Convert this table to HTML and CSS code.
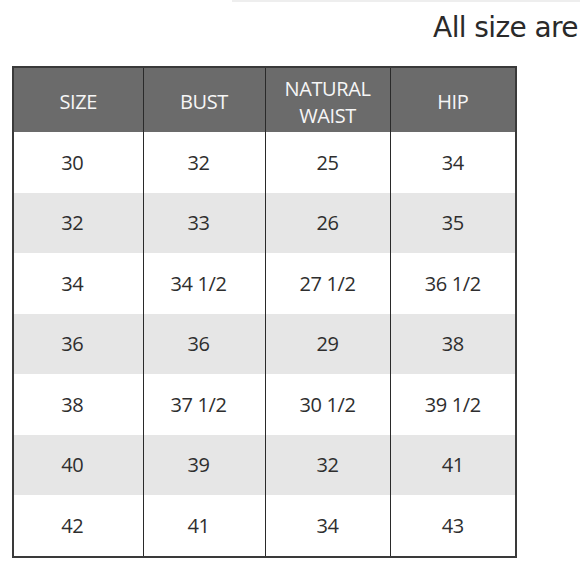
FILE: index.html
```html
<!DOCTYPE html>
<html>
<head>
<meta charset="utf-8">
<link rel="stylesheet" href="styles.css">
</head>
<body>
<div class="topline"></div>
<div class="note">All size are</div>
<table class="chart">
  <colgroup>
    <col class="c1"><col class="c2"><col class="c3"><col class="c4">
  </colgroup>
  <thead>
    <tr><th>SIZE</th><th>BUST</th><th>NATURAL<br>WAIST</th><th>HIP</th></tr>
  </thead>
  <tbody>
    <tr><td>30</td><td>32</td><td>25</td><td>34</td></tr>
    <tr class="alt"><td>32</td><td>33</td><td>26</td><td>35</td></tr>
    <tr><td>34</td><td>34 1/2</td><td>27 1/2</td><td>36 1/2</td></tr>
    <tr class="alt"><td>36</td><td>36</td><td>29</td><td>38</td></tr>
    <tr><td>38</td><td>37 1/2</td><td>30 1/2</td><td>39 1/2</td></tr>
    <tr class="alt"><td>40</td><td>39</td><td>32</td><td>41</td></tr>
    <tr><td>42</td><td>41</td><td>34</td><td>43</td></tr>
  </tbody>
</table>
</body>
</html>
```
FILE: styles.css
```css
html, body {
  margin: 0;
  padding: 0;
  background: #ffffff;
}
body {
  width: 580px;
  height: 580px;
  overflow: hidden;
}
.topline {
  height: 2px;
  margin-left: 232px;
  background: #eeeeee;
}
.note {
  margin-top: 10px;
  height: 54px;
  text-align: right;
  padding-right: 2px;
  font-family: "DejaVu Sans", sans-serif;
  font-size: 28px;
  line-height: 32px;
  letter-spacing: -0.6px;
  color: #2a2a2a;
}
.chart {
  margin-left: 12px;
  width: 503px;
  border-collapse: collapse;
  table-layout: fixed;
  border: 2px solid #3a3a3a;
  font-family: "Open Sans", sans-serif;
  letter-spacing: -0.4px;
}
.c1 { width: 130px; }
.c2 { width: 122px; }
.c3 { width: 125px; }
.c4 { width: 126px; }
.chart th {
  height: 61px;
  padding: 3px 0 0;
  background: #6b6b6b;
  color: #f6f6f6;
  font-weight: 400;
  font-size: 20px;
  line-height: 27px;
  text-align: center;
  border-left: 1px solid #2a2a2a;
  border-right: 1px solid #2a2a2a;
}
.chart td {
  height: 60.5px;
  padding: 0;
  text-align: center;
  font-size: 20px;
  color: #2e2e2e;
  border-left: 1px solid #2a2a2a;
  border-right: 1px solid #2a2a2a;
}
.chart td:nth-child(1) {
  padding-right: 12px;
}
.chart td:nth-child(2) {
  padding-right: 11px;
}
.chart tr.alt td {
  background: #e6e6e6;
}
```
